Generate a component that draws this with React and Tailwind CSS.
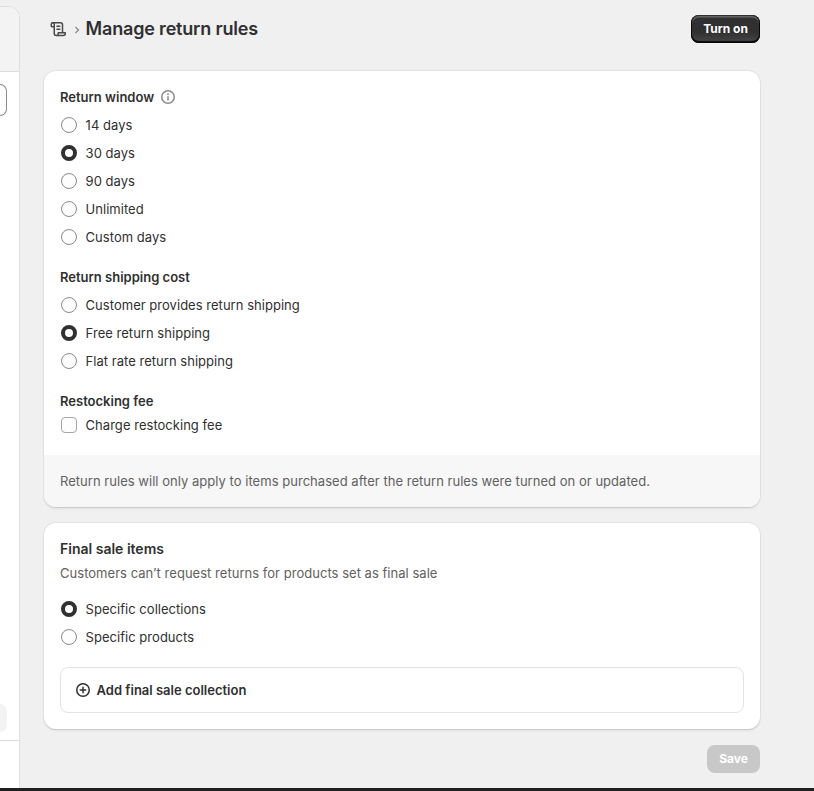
const windowOptions = ["14 days", "30 days", "90 days", "Unlimited", "Custom days"]
const shippingOptions = [
  "Customer provides return shipping",
  "Free return shipping",
  "Flat rate return shipping",
]
const finalSaleOptions = ["Specific collections", "Specific products"]

const cardClass =
  "bg-white rounded-xl overflow-hidden shadow-[0_1px_1px_0_#c8c8c8,0_0_0_1px_#e3e3e3,0_2px_3px_0_#0000000d]"

const ReceiptIcon = () => (
  <svg className="w-5 h-5" viewBox="0 0 20 20" fill="none" stroke="#4a4a4a" strokeWidth="1.5" strokeLinecap="round" strokeLinejoin="round">
    <path d="M6.25 7.75h-2.25a.75.75 0 0 1-.75-.75v-1.75a1.5 1.5 0 0 1 3 0v9.25a2 2 0 0 0 2 2h7a2 2 0 0 0 2-2v-.75h-7v.75a2 2 0 0 1-2 2" />
    <path d="M4.75 3.75h7.75a2 2 0 0 1 2 2v7.5" />
    <path d="M9 7.25h2.75M9 10.25h2.75" />
  </svg>
)

const InfoIcon = () => (
  <svg className="w-5 h-5" viewBox="0 0 20 20" fill="none">
    <circle cx="10" cy="10" r="6.25" stroke="#8a8a8a" strokeWidth="1.5" />
    <path d="M10 9.75v3.25" stroke="#8a8a8a" strokeWidth="1.5" strokeLinecap="round" />
    <circle cx="10" cy="7.2" r="0.95" fill="#8a8a8a" />
  </svg>
)

const PlusCircleIcon = () => (
  <svg className="w-5 h-5" viewBox="0 0 20 20" fill="none" stroke="#303030" strokeWidth="1.5" strokeLinecap="round">
    <circle cx="10" cy="10" r="6.25" />
    <path d="M10 7.25v5.5M7.25 10h5.5" />
  </svg>
)

const Radio = ({ label, checked }) => (
  <div className="flex items-center h-5 pl-px">
    <span
      className={
        checked
          ? "w-4 h-4 rounded-full bg-white border-4 border-[#303030]"
          : "w-4 h-4 rounded-full bg-[#fdfdfd] border border-[#8a8a8a]"
      }
    ></span>
    <span className="ml-[8.6px]">{label}</span>
  </div>
)

const RadioGroup = ({ options, selected }) => (
  <div className="flex flex-col gap-2">
    {options.map((option) => (
      <Radio key={option} label={option} checked={option === selected} />
    ))}
  </div>
)

const Sidebar = () => (
  <div className="w-5 shrink-0 pt-1.5">
    <div className="h-full flex flex-col bg-white border-r border-t border-[#dedede] rounded-tr-xl overflow-hidden">
      <div className="h-[65px] shrink-0 bg-[#f3f3f3] border-b border-[#dedede]"></div>
      <div className="w-[7px] h-8 mt-3 shrink-0 bg-[#fdfdfd] border border-l-0 border-[#8a8a8a] rounded-r-lg"></div>
      <div className="w-[7px] h-7 mt-auto mb-2 shrink-0 bg-[#f3f3f3] rounded-r-lg"></div>
      <div className="h-12 shrink-0 border-t border-[#dedede]"></div>
    </div>
  </div>
)

const App = () => {
  return (
    <div className="h-[791px] flex flex-col bg-[#f0f0f0] text-[#303030] font-['Inter',sans-serif] text-[13px] leading-5 tracking-[0.03px] overflow-hidden">
      <div className="flex flex-1 min-h-0">
        <Sidebar />
        <main className="w-[716px] ml-6">
          <header className="flex items-center h-7 mt-[15px]">
            <div className="ml-1">
              <ReceiptIcon />
            </div>
            <svg className="w-[6px] h-2 ml-[6px] mt-px" viewBox="0 0 6 8" fill="none" stroke="#8a8a8a" strokeWidth="1.3">
              <path d="M1.5 1l3 3-3 3" />
            </svg>
            <h1 className="ml-[5.6px] text-lg leading-6 font-semibold tracking-[-0.18px]">Manage return rules</h1>
            <button className="ml-auto h-7 w-[69px] rounded-lg bg-linear-to-b from-[#303030] from-60% to-[#474747] text-white text-xs font-bold tracking-normal shadow-[inset_0_-1px_0_1px_#000000cc,inset_0_0_0_1px_#303030,inset_0_1.5px_0_1px_#ffffff40]">
              Turn on
            </button>
          </header>

          <section className={`${cardClass} mt-7`}>
            <div className="px-4 pt-4 pb-5">
              <div className="flex items-center gap-1 mb-2">
                <h2 className="font-[590] tracking-normal">Return window</h2>
                <InfoIcon />
              </div>
              <RadioGroup options={windowOptions} selected="30 days" />
              <h2 className="font-[590] tracking-normal mt-5 mb-2">Return shipping cost</h2>
              <RadioGroup options={shippingOptions} selected="Free return shipping" />
              <h2 className="font-[590] tracking-normal mt-5 mb-1">Restocking fee</h2>
              <div className="flex items-center h-5 pl-px">
                <span className="w-4 h-4 rounded-[4px] bg-[#fdfdfd] border border-[#a6a6a6]"></span>
                <span className="ml-[8.6px]">Charge restocking fee</span>
              </div>
            </div>
            <div className="bg-[#f7f7f7] p-4 text-[#616161]">
              Return rules will only apply to items purchased after the return rules were turned on or updated.
            </div>
          </section>

          <section className={`${cardClass} mt-4 p-4`}>
            <h2 className="text-sm leading-5 font-[590] tracking-normal">Final sale items</h2>
            <p className="mt-1 mb-4 text-[#616161]">Customers can’t request returns for products set as final sale</p>
            <RadioGroup options={finalSaleOptions} selected="Specific collections" />
            <div className="flex items-center h-[46px] mt-5 pl-3 border border-[#e3e3e3] rounded-lg font-[590] tracking-normal">
              <PlusCircleIcon />
              <span className="ml-[3.6px]">Add final sale collection</span>
            </div>
          </section>

          <div className="flex justify-end mt-4">
            <button className="h-7 w-[53px] rounded-lg bg-[#c8c8c8] text-white text-xs font-bold tracking-normal">Save</button>
          </div>
        </main>
      </div>
      <div className="h-[3px] shrink-0 bg-[#1f1f1f]"></div>
    </div>
  )
}

export default App
